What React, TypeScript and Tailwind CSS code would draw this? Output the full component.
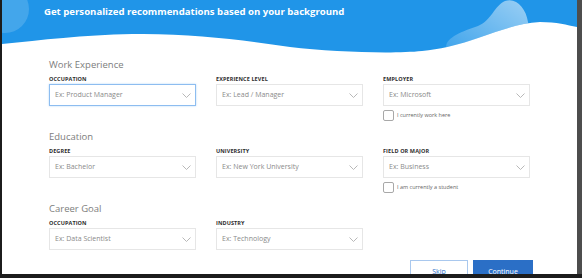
import React from 'react';

const font = { fontFamily: '"Open Sans", "Liberation Sans", sans-serif' };

function Chevron() {
  return (
    <svg width="9" height="5" viewBox="0 0 9 5" className="shrink-0">
      <polyline points="0.5,0.5 4.5,4.5 8.5,0.5" fill="none" stroke="#b0b0b0" strokeWidth="0.9" />
    </svg>
  );
}

function Field({ label, placeholder, focused }: { label: string; placeholder: string; focused?: boolean }) {
  return (
    <div className="flex w-[147px] flex-col">
      <div className="h-[8px] text-[5.5px] font-bold uppercase leading-[8px] tracking-[0.1px] text-[#2e2e2e]">{label}</div>
      <div
        className={
          focused
            ? 'mt-[1px] flex h-[22px] items-center justify-between border border-[#8dbdf0] pl-[5px] pr-[4px] shadow-[0_0_2px_#b9d8f7]'
            : 'mt-[1px] flex h-[22px] items-center justify-between border border-[#e6e6e6] pl-[5px] pr-[4px]'
        }
      >
        <span className="text-[7px] text-[#8a8a8a]">{placeholder}</span>
        <Chevron />
      </div>
    </div>
  );
}

function Check({ text }: { text: string }) {
  return (
    <div className="mt-[4px] flex h-[11px] items-center gap-[3px]">
      <div className="h-[11px] w-[11px] rounded-[2px] border border-[#a8a8a8]" />
      <span className="text-[5.5px] text-[#666]">{text}</span>
    </div>
  );
}

function Section({ title, children, checks }: { title: string; children: React.ReactNode; checks?: string }) {
  return (
    <div className="flex flex-col">
      <h2 className="h-[12px] text-[9.5px] font-normal leading-[12px] text-[#7d7d7d]">{title}</h2>
      <div className="mt-[4px] flex gap-[20px]">{children}</div>
      {checks ? (
        <div className="flex">
          <div className="w-[334px]" />
          <Check text={checks} />
        </div>
      ) : null}
    </div>
  );
}

function HeaderArt() {
  const wave =
    'M0 0 H575 V27 C565 25 555 22 538 22 C500 24 470 46 420 51 C390 54 330 52 288 47 C240 40 190 33 130 34 C80 35 40 40 0 44 Z';
  return (
    <svg width="575" height="58" viewBox="0 0 575 58" className="absolute left-0 top-0">
      <defs>
        <clipPath id="waveClip">
          <path d={wave} />
        </clipPath>
        <linearGradient id="blobGrad" x1="1" y1="0" x2="0" y2="1">
          <stop offset="0" stopColor="#ffffff" stopOpacity="0.55" />
          <stop offset="1" stopColor="#ffffff" stopOpacity="0.12" />
        </linearGradient>
      </defs>
      <path d={wave} fill="#2095e8" />
      <g clipPath="url(#waveClip)">
        <circle cx="3" cy="9" r="24" fill="#ffffff" fillOpacity="0.16" />
        <path
          d="M446 52 C438 40 458 32 476 26 C490 20 492 6 503 1 C514 -3 524 8 526 22 C528 34 524 46 520 56 Z"
          fill="url(#blobGrad)"
        />
      </g>
    </svg>
  );
}

export default function App() {
  return (
    <div className="flex h-[278px] w-[582px] bg-[#1c1c1c]" style={font}>
      <div className="ml-[2px] flex h-[274px] w-[575px] flex-col overflow-hidden bg-white">
        {/* Header */}
        <div className="relative h-[56px] shrink-0">
          <HeaderArt />
          <h1 className="relative pl-[42px] pt-[5px] text-[9.6px] font-bold leading-[14px] text-white">
            Get personalized recommendations based on your background
          </h1>
        </div>

        {/* Form */}
        <div className="flex flex-col pl-[47px] pt-[3px]">
          <Section title="Work Experience" checks="I currently work here">
            <Field label="Occupation" placeholder="Ex: Product Manager" focused />
            <Field label="Experience Level" placeholder="Ex: Lead / Manager" />
            <Field label="Employer" placeholder="Ex: Microsoft" />
          </Section>
          <div className="h-[10px]" />
          <Section title="Education" checks="I am currently a student">
            <Field label="Degree" placeholder="Ex: Bachelor" />
            <Field label="University" placeholder="Ex: New York University" />
            <Field label="Field or Major" placeholder="Ex: Business" />
          </Section>
          <div className="h-[10px]" />
          <Section title="Career Goal">
            <Field label="Occupation" placeholder="Ex: Data Scientist" />
            <Field label="Industry" placeholder="Ex: Technology" />
          </Section>

          <div className="mt-[10px] flex gap-[5px] pl-[361px]">
            <button className="h-[20px] w-[58px] border border-[#a9c8ee] bg-white pt-[3px] text-[7px] leading-[8px] text-[#2b6fc6]">Skip</button>
            <button className="h-[20px] w-[60px] bg-[#2b6fc6] pt-[3px] text-[7px] leading-[8px] text-white">Continue</button>
          </div>
        </div>
      </div>
      <div className="flex h-[278px] flex-1 flex-col">
        <div className="h-[274px] bg-[#4d4d4d]" />
      </div>
    </div>
  );
}
